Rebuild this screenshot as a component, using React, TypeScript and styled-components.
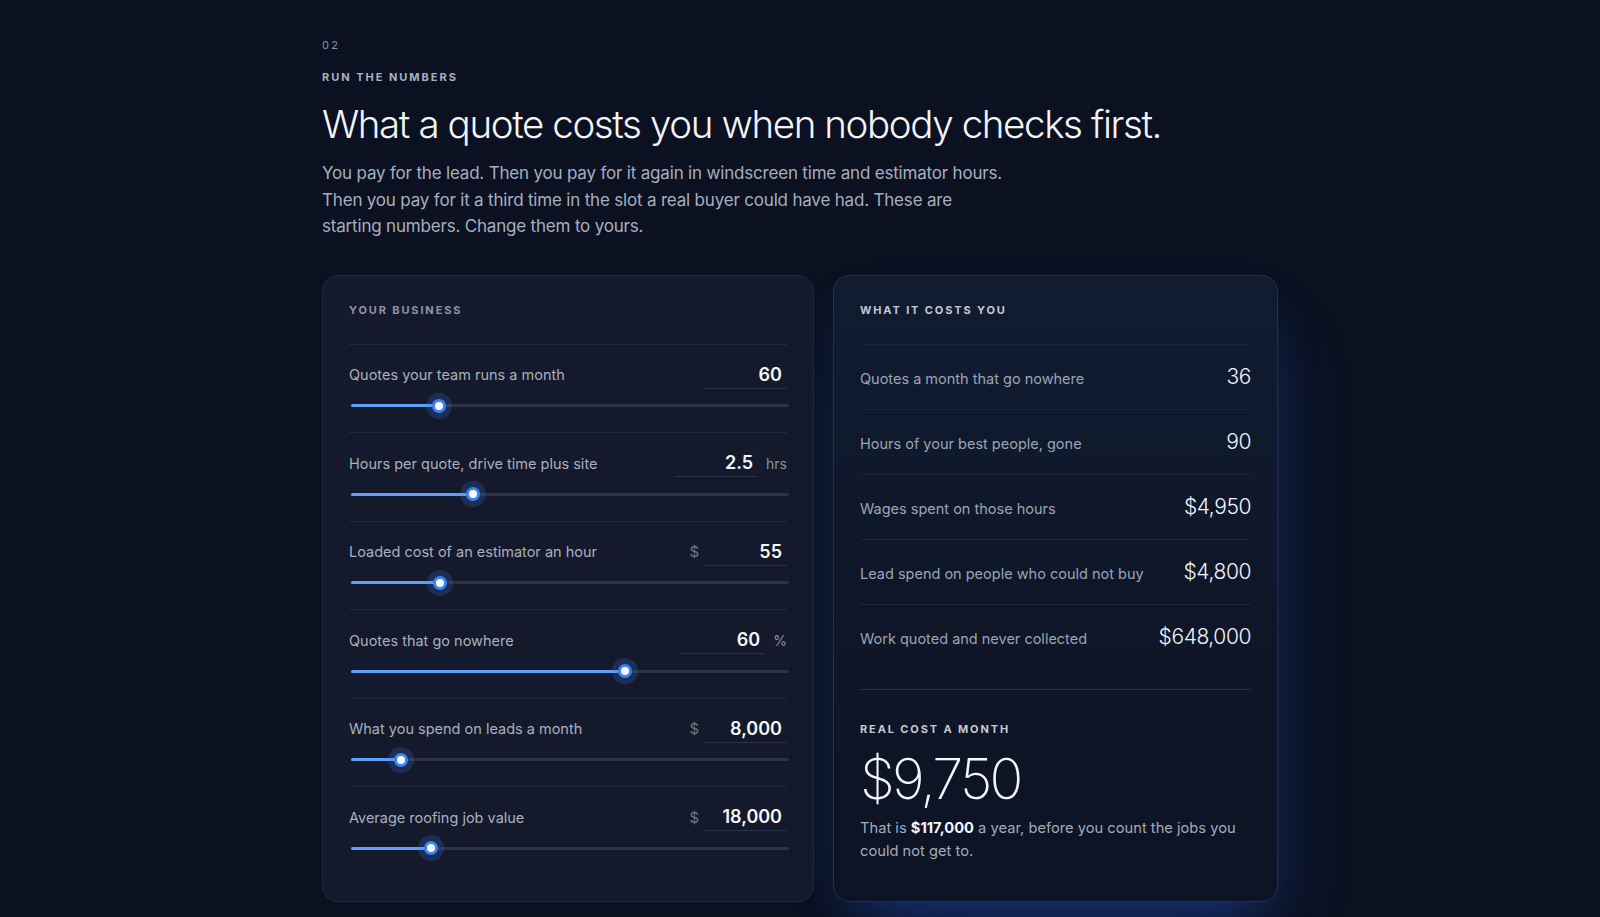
import React from "react";
import styled, { createGlobalStyle } from "styled-components";

const GlobalStyle = createGlobalStyle`
	html, body {
		margin: 0;
		padding: 0;
		background: #0b1120;
	}

	body {
		font-family: "Inter", "Noto Sans", "Liberation Sans", sans-serif;
		color: #e9edf4;
		-webkit-font-smoothing: antialiased;
	}
`;

const Section = styled.section`
	width: 956px;
	margin: 0 auto;
	padding: 37px 0 40px;
	box-sizing: border-box;
`;

const Index = styled.p`
	margin: 0;
	font-size: 11px;
	line-height: 16px;
	letter-spacing: 0.22em;
	color: #8a93a5;
`;

const Eyebrow = styled.p`
	margin: 16px 0 0;
	font-size: 11px;
	line-height: 16px;
	font-weight: 700;
	letter-spacing: 0.18em;
	color: #a9b1c0;
`;

const Title = styled.h2`
	margin: 16px 0 0;
	font-size: 38.5px;
	line-height: 47px;
	font-weight: 300;
	letter-spacing: -0.036em;
	color: #f2f5fa;
`;

const Lead = styled.p`
	margin: 12px 0 0;
	max-width: 690px;
	font-size: 17px;
	line-height: 26.5px;
	letter-spacing: -0.011em;
	color: #a7afbf;
`;

const Grid = styled.div`
	margin-top: 35px;
	display: grid;
	grid-template-columns: 492px 1fr;
	gap: 19px;
	align-items: stretch;
`;

const Card = styled.div<{ $accent?: boolean }>`
	border-radius: 16px;
	padding: 26px 26px 26px;
	box-sizing: border-box;
	border: 1px solid ${(p) => (p.$accent ? "#1d3152" : "#222a3c")};
	background: ${(p) =>
		p.$accent
			? "linear-gradient(180deg, #111c31 0%, #0e1628 55%, #0c1324 100%)"
			: "#141a2b"};
	box-shadow: ${(p) =>
		p.$accent
			? "20px 40px 80px -30px rgba(37, 99, 235, 0.22), 0 26px 50px -18px rgba(37, 99, 235, 0.35)"
			: "none"};
`;

const CardLabel = styled.p<{ $bright?: boolean }>`
	margin: 0 0 26px;
	font-size: 11px;
	line-height: 16px;
	font-weight: 700;
	letter-spacing: 0.17em;
	color: ${(p) => (p.$bright ? "#c3c9d4" : "#8d95a6")};
`;

/* left column: one row per input */

const InputRow = styled.div`
	border-top: 1px solid #222a3b;
	padding: 16px 0 19.5px;
`;

const InputHead = styled.div`
	display: flex;
	align-items: center;
	height: 28px;
`;

const InputLabel = styled.span`
	flex: 1;
	font-size: 14.5px;
	color: #a9b0bf;
`;

const Affix = styled.span<{ $after?: boolean }>`
	font-size: ${(p) => (p.$after ? "14px" : "15px")};
	color: ${(p) => (p.$after ? "#8a92a3" : "#6f7787")};
	margin: ${(p) => (p.$after ? "0 0 0 8px" : "0 4px 0 0")};
`;

const ValueBox = styled.span`
	width: 84px;
	height: 28px;
	box-sizing: border-box;
	padding-right: 5px;
	border-bottom: 1px solid #2a3345;
	display: flex;
	align-items: center;
	justify-content: flex-end;
	font-size: 18px;
	font-weight: 600;
	color: #f4f6fa;
`;

const Track = styled.div`
	position: relative;
	margin: 10px -2px 0 2px;
	height: 14px;
	display: flex;
	align-items: center;

	&::before {
		content: "";
		width: 100%;
		height: 3px;
		border-radius: 2px;
		background: #2b3345;
	}
`;

const Fill = styled.span`
	position: absolute;
	left: 0;
	top: 5.5px;
	height: 3px;
	border-radius: 2px;
	background: #5ea2f8;
`;

const Thumb = styled.span`
	position: absolute;
	top: 0;
	width: 14px;
	height: 14px;
	margin-left: -7px;
	box-sizing: border-box;
	border-radius: 50%;
	background: #ffffff;
	border: 3px solid #3a82f6;
	box-shadow: 0 0 0 6px rgba(59, 130, 246, 0.2);
`;

/* right column: result lines */

const ResultRow = styled.div`
	border-top: 1px solid #1b2539;
	padding: 21px 0;
	display: flex;
	align-items: center;
	justify-content: space-between;
	height: 22px;
	box-sizing: content-box;
`;

const ResultLabel = styled.span`
	font-size: 14.5px;
	color: #9ca5b6;
	padding-top: 3px;
`;

const ResultValue = styled.span`
	font-size: 21px;
	font-weight: 300;
	letter-spacing: -0.02em;
	color: #f1f4f9;
`;

const Total = styled.div`
	margin-top: 20px;
	border-top: 1px solid #1f3353;
	padding-top: 31px;
`;

const TotalLabel = styled(CardLabel)`
	margin: 0;
`;

const TotalValue = styled.p`
	margin: 12px 0 0;
	font-size: 56px;
	line-height: 1.1;
	font-weight: 200;
	letter-spacing: -0.05em;
	color: #f4f6fa;
`;

const TotalNote = styled.p`
	margin: 7px 0 0;
	font-size: 14.7px;
	line-height: 22.5px;
	color: #a3abba;

	strong {
		color: #f4f6fa;
		font-weight: 700;
	}
`;

type Input = {
	label: string;
	value: number;
	min: number;
	max: number;
	text: string;
	prefix?: string;
	suffix?: string;
};

const inputs: Input[] = [
	{ label: "Quotes your team runs a month", value: 60, min: 10, max: 260, text: "60" },
	{ label: "Hours per quote, drive time plus site", value: 2.5, min: 0, max: 9, text: "2.5", suffix: "hrs" },
	{ label: "Loaded cost of an estimator an hour", value: 55, min: 0, max: 270, text: "55", prefix: "$" },
	{ label: "Quotes that go nowhere", value: 60, min: 10, max: 90, text: "60", suffix: "%" },
	{ label: "What you spend on leads a month", value: 8000, min: 0, max: 70000, text: "8,000", prefix: "$" },
	{ label: "Average roofing job value", value: 18000, min: 0, max: 98000, text: "18,000", prefix: "$" },
];

const results = [
	{ label: "Quotes a month that go nowhere", value: "36" },
	{ label: "Hours of your best people, gone", value: "90" },
	{ label: "Wages spent on those hours", value: "$4,950" },
	{ label: "Lead spend on people who could not buy", value: "$4,800" },
	{ label: "Work quoted and never collected", value: "$648,000" },
];

const Slider = ({ value, min, max }: { value: number; min: number; max: number }) => {
	const pct = ((value - min) / (max - min)) * 100;
	return (
		<Track>
			<Fill style={{ width: `${pct}%` }} />
			<Thumb style={{ left: `${pct}%` }} />
		</Track>
	);
};

const App = () => {
	return (
		<>
			<GlobalStyle />
			<Section>
				<Index>02</Index>
				<Eyebrow>RUN THE NUMBERS</Eyebrow>
				<Title>What a quote costs you when nobody checks first.</Title>
				<Lead>
					You pay for the lead. Then you pay for it again in windscreen time and estimator hours.
					Then you pay for it a third time in the slot a real buyer could have had. These are
					starting numbers. Change them to yours.
				</Lead>

				<Grid>
					<Card>
						<CardLabel>YOUR BUSINESS</CardLabel>
						{inputs.map((item) => (
							<InputRow key={item.label}>
								<InputHead>
									<InputLabel>{item.label}</InputLabel>
									{item.prefix && <Affix>{item.prefix}</Affix>}
									<ValueBox>{item.text}</ValueBox>
									{item.suffix && <Affix $after>{item.suffix}</Affix>}
								</InputHead>
								<Slider value={item.value} min={item.min} max={item.max} />
							</InputRow>
						))}
					</Card>

					<Card $accent>
						<CardLabel $bright>WHAT IT COSTS YOU</CardLabel>
						{results.map((r) => (
							<ResultRow key={r.label}>
								<ResultLabel>{r.label}</ResultLabel>
								<ResultValue>{r.value}</ResultValue>
							</ResultRow>
						))}
						<Total>
							<TotalLabel $bright>REAL COST A MONTH</TotalLabel>
							<TotalValue>$9,750</TotalValue>
							<TotalNote>
								That is <strong>$117,000</strong> a year, before you count the jobs you could not
								get to.
							</TotalNote>
						</Total>
					</Card>
				</Grid>
			</Section>
		</>
	);
};

export default App;
